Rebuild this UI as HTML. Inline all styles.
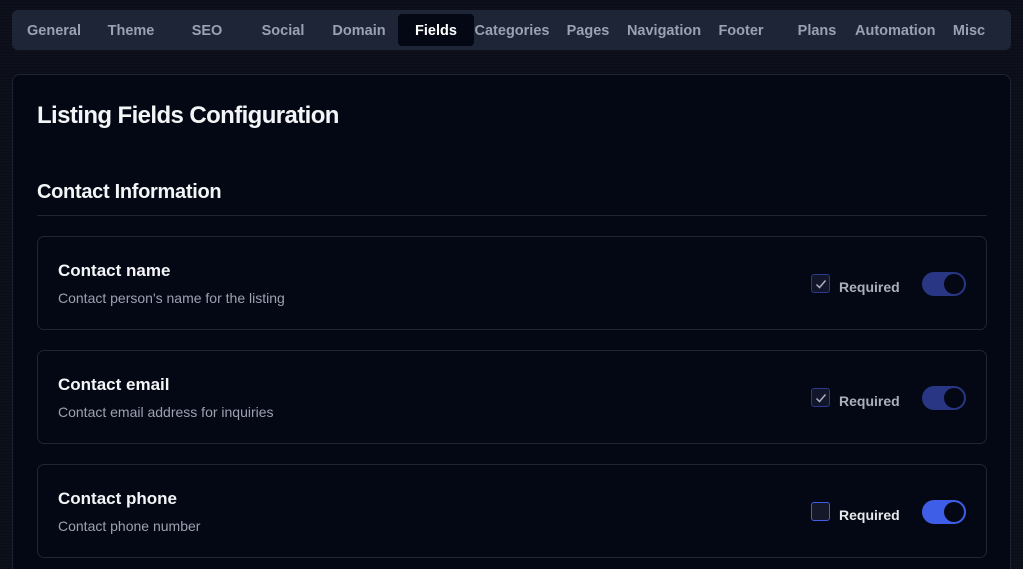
<!DOCTYPE html>
<html><head><style>
*{margin:0;padding:0;box-sizing:border-box}
html,body{width:1023px;height:569px;overflow:hidden}
body{background:#0b0e19;background-image:repeating-linear-gradient(0deg,#0a0d17 0 1px,#0e111c 1px 3px);font-family:"Liberation Sans",sans-serif;position:relative}
.tabs{position:absolute;left:12px;top:10px;width:999px;height:40px;background:#1e2536;border-radius:6px}
.tab{position:absolute;top:4px;width:76px;height:32px;line-height:34px;text-align:center;color:#9aa2b1;font-size:14.5px;font-weight:bold}
.tab.act{background:#040814;color:#fff;border-radius:4px}
.main{position:absolute;left:12px;top:74px;width:999px;height:520px;background:#040814;border:1px solid #1d2332;border-radius:8px}
h1{position:absolute;left:24px;top:27px;color:#f4f5f7;font-size:24px;letter-spacing:-0.6px}
h2{position:absolute;left:24px;top:106px;color:#f4f5f7;font-size:20px;letter-spacing:-0.3px}
.hr{position:absolute;left:24px;top:140px;width:950px;height:1px;background:#1f2535}
.row{position:absolute;left:24px;width:950px;height:94px;border:1px solid #1f2535;border-radius:7px}
.row .t{position:absolute;left:20px;top:24px;color:#f4f5f7;font-size:17px;font-weight:bold}
.row .d{position:absolute;left:20px;top:53px;color:#9aa2b1;font-size:14px}
.cb{position:absolute;left:773px;top:37px;width:19px;height:19px;border:1px solid #2b3a8c;border-radius:3px;background:#11162a}
.cb svg{position:absolute;left:3px;top:3px}
.rq{position:absolute;left:801px;top:42px;color:#a9b0bd;font-size:14px;font-weight:bold}
.rq.w{color:#e6e8ec}
.tg{position:absolute;left:884px;top:35px;width:44px;height:24px;border-radius:12px;background:#283684}
.tg.on{background:#3f5ee8}
.tg i{position:absolute;right:2px;top:2px;width:20px;height:20px;border-radius:50%;background:#040814}
</style></head><body>
<div class="tabs">
<div class="tab" style="left:4px">General</div>
<div class="tab" style="left:81px">Theme</div>
<div class="tab" style="left:157px">SEO</div>
<div class="tab" style="left:233px">Social</div>
<div class="tab" style="left:309px">Domain</div>
<div class="tab act" style="left:386px">Fields</div>
<div class="tab" style="left:462px">Categories</div>
<div class="tab" style="left:538px">Pages</div>
<div class="tab" style="left:614px">Navigation</div>
<div class="tab" style="left:691px">Footer</div>
<div class="tab" style="left:767px">Plans</div>
<div class="tab" style="left:843px">Automation</div>
<div class="tab" style="left:919px">Misc</div>
</div>
<div class="main">
<h1>Listing Fields Configuration</h1>
<h2>Contact Information</h2>
<div class="hr"></div>
<div class="row" style="top:161px"><div class="t">Contact name</div><div class="d">Contact person's name for the listing</div>
<div class="cb"><svg width="12" height="12" viewBox="0 0 12 12"><path d="M1.5 6.5L4.5 9.5L10.5 2.5" fill="none" stroke="#aab0bd" stroke-width="1.5"/></svg></div><div class="rq">Required</div><div class="tg"><i></i></div></div>
<div class="row" style="top:275px"><div class="t">Contact email</div><div class="d">Contact email address for inquiries</div>
<div class="cb"><svg width="12" height="12" viewBox="0 0 12 12"><path d="M1.5 6.5L4.5 9.5L10.5 2.5" fill="none" stroke="#aab0bd" stroke-width="1.5"/></svg></div><div class="rq">Required</div><div class="tg"><i></i></div></div>
<div class="row" style="top:389px"><div class="t">Contact phone</div><div class="d">Contact phone number</div>
<div class="cb" style="border-color:#3f5ee8;background:#141828"></div><div class="rq w">Required</div><div class="tg on"><i></i></div></div>
</div>
</body></html>
